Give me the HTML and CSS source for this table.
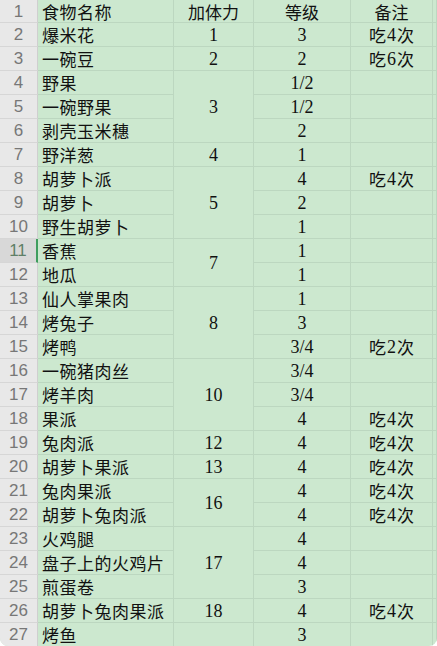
FILE: index.html
```html
<!DOCTYPE html>
<html lang="zh-CN">
<head>
<meta charset="utf-8">
<title>食物表</title>
<link rel="stylesheet" href="styles.css">
</head>
<body>
<div class="sheet">
  <div class="rn">1</div><div class="c name">食物名称</div><div class="c ctr">加体力</div><div class="c ctr">等级</div><div class="c ctr">备注</div><div class="c"></div>
  <div class="rn">2</div><div class="c name">爆米花</div><div class="c ctr num">1</div><div class="c ctr num">3</div><div class="c ctr">吃<span class="num">4</span>次</div><div class="c"></div>
  <div class="rn">3</div><div class="c name">一碗豆</div><div class="c ctr num">2</div><div class="c ctr num">2</div><div class="c ctr">吃<span class="num">6</span>次</div><div class="c"></div>
  <div class="rn">4</div><div class="c name">野果</div><div class="c ctr num span3">3</div><div class="c ctr num">1/2</div><div class="c"></div><div class="c"></div>
  <div class="rn">5</div><div class="c name">一碗野果</div><div class="c ctr num">1/2</div><div class="c"></div><div class="c"></div>
  <div class="rn">6</div><div class="c name">剥壳玉米穗</div><div class="c ctr num">2</div><div class="c"></div><div class="c"></div>
  <div class="rn">7</div><div class="c name">野洋葱</div><div class="c ctr num">4</div><div class="c ctr num">1</div><div class="c"></div><div class="c"></div>
  <div class="rn">8</div><div class="c name">胡萝卜派</div><div class="c ctr num span3">5</div><div class="c ctr num">4</div><div class="c ctr">吃<span class="num">4</span>次</div><div class="c"></div>
  <div class="rn">9</div><div class="c name">胡萝卜</div><div class="c ctr num">2</div><div class="c"></div><div class="c"></div>
  <div class="rn">10</div><div class="c name">野生胡萝卜</div><div class="c ctr num">1</div><div class="c"></div><div class="c"></div>
  <div class="rn sel">11</div><div class="c name">香蕉</div><div class="c ctr num span2">7</div><div class="c ctr num">1</div><div class="c"></div><div class="c"></div>
  <div class="rn">12</div><div class="c name">地瓜</div><div class="c ctr num">1</div><div class="c"></div><div class="c"></div>
  <div class="rn">13</div><div class="c name">仙人掌果肉</div><div class="c ctr num span3">8</div><div class="c ctr num">1</div><div class="c"></div><div class="c"></div>
  <div class="rn">14</div><div class="c name">烤兔子</div><div class="c ctr num">3</div><div class="c"></div><div class="c"></div>
  <div class="rn">15</div><div class="c name">烤鸭</div><div class="c ctr num">3/4</div><div class="c ctr">吃<span class="num">2</span>次</div><div class="c"></div>
  <div class="rn">16</div><div class="c name">一碗猪肉丝</div><div class="c ctr num span3">10</div><div class="c ctr num">3/4</div><div class="c"></div><div class="c"></div>
  <div class="rn">17</div><div class="c name">烤羊肉</div><div class="c ctr num">3/4</div><div class="c"></div><div class="c"></div>
  <div class="rn">18</div><div class="c name">果派</div><div class="c ctr num">4</div><div class="c ctr">吃<span class="num">4</span>次</div><div class="c"></div>
  <div class="rn">19</div><div class="c name">兔肉派</div><div class="c ctr num">12</div><div class="c ctr num">4</div><div class="c ctr">吃<span class="num">4</span>次</div><div class="c"></div>
  <div class="rn">20</div><div class="c name">胡萝卜果派</div><div class="c ctr num">13</div><div class="c ctr num">4</div><div class="c ctr">吃<span class="num">4</span>次</div><div class="c"></div>
  <div class="rn">21</div><div class="c name">兔肉果派</div><div class="c ctr num span2">16</div><div class="c ctr num">4</div><div class="c ctr">吃<span class="num">4</span>次</div><div class="c"></div>
  <div class="rn">22</div><div class="c name">胡萝卜兔肉派</div><div class="c ctr num">4</div><div class="c ctr">吃<span class="num">4</span>次</div><div class="c"></div>
  <div class="rn">23</div><div class="c name">火鸡腿</div><div class="c ctr num span3">17</div><div class="c ctr num">4</div><div class="c"></div><div class="c"></div>
  <div class="rn">24</div><div class="c name">盘子上的火鸡片</div><div class="c ctr num">4</div><div class="c"></div><div class="c"></div>
  <div class="rn">25</div><div class="c name">煎蛋卷</div><div class="c ctr num">3</div><div class="c"></div><div class="c"></div>
  <div class="rn">26</div><div class="c name">胡萝卜兔肉果派</div><div class="c ctr num">18</div><div class="c ctr num">4</div><div class="c ctr">吃<span class="num">4</span>次</div><div class="c"></div>
  <div class="rn">27</div><div class="c name">烤鱼</div><div class="c"></div><div class="c ctr num">3</div><div class="c"></div><div class="c"></div>
</div>
</body>
</html>
```
FILE: styles.css
```css
html, body {
  margin: 0;
  padding: 0;
  background: #ffffff;
}
.sheet {
  width: 437px;
  height: 646px;
  overflow: hidden;
  border-radius: 0 0 8px 8px;
  display: grid;
  grid-template-columns: 38px 136px 80px 97px 82px 1fr;
  grid-template-rows: 23px repeat(26, 24px);
  background: #cce8cf;
  font-family: "Noto Sans CJK SC", "Noto Sans", sans-serif;
  font-size: 17px;
  color: #111111;
}
.rn {
  box-sizing: border-box;
  background: #e8e8e8;
  border-right: 1px solid #cfcfcf;
  border-bottom: 1px solid #d6d6d6;
  color: #777777;
  font-family: "Liberation Sans", "DejaVu Sans", sans-serif;
  font-size: 17px;
  display: flex;
  align-items: center;
  justify-content: center;
  line-height: 1;
}
.rn.sel {
  background: #d8d8d8;
  color: #5f7f67;
  border-right: 2px solid #3f9d5e;
}
.c {
  box-sizing: border-box;
  border-right: 1px solid #bcd7c0;
  border-bottom: 1px solid #bcd7c0;
  display: flex;
  align-items: center;
  line-height: 1;
  white-space: nowrap;
}
.name {
  padding-left: 4px;
  letter-spacing: 0.5px;
}
.ctr {
  justify-content: center;
}
.num, .ctr .num {
  font-family: "Liberation Serif", "DejaVu Serif", serif;
  font-size: 18px;
}
.ctr .num {
  padding: 0 1px;
}
.span2 {
  grid-row: span 2;
}
.span3 {
  grid-row: span 3;
}
```
